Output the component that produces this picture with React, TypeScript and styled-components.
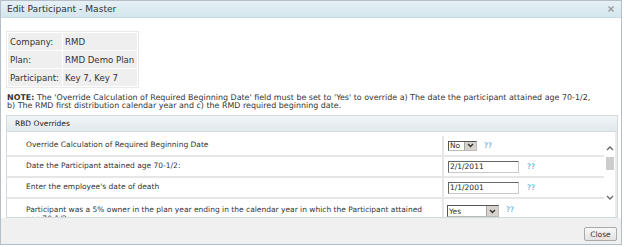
import React from "react";
import styled, { createGlobalStyle } from "styled-components";

const GlobalStyle = createGlobalStyle`
  html, body { margin: 0; padding: 0; background: #ffffff; }
  body { font-family: "DejaVu Sans", Verdana, sans-serif; font-size: 7.5px; color: #333; }
  * { box-sizing: border-box; }
`;

const Dialog = styled.div`
  width: 622px;
  height: 245px;
  border: 1px solid #b4bec4;
  display: flex;
  flex-direction: column;
  background: #fff;
`;

const TitleBar = styled.div`
  height: 17px;
  flex: none;
  display: flex;
  align-items: center;
  justify-content: space-between;
  padding: 0 7px 0 6px;
  background: linear-gradient(#e6f1f6, #d3e6ee);
  border-bottom: 1px solid #c9dbe3;
  font-size: 9.1px;
  color: #333;
`;

const CloseX = styled.svg`
  width: 6px;
  height: 6px;
  margin-top: -1px;
`;

const Body = styled.div`
  flex: 1;
  padding: 13px 4px 0 5px;
  display: flex;
  flex-direction: column;
  align-items: flex-start;
`;

const InfoTable = styled.div`
  display: grid;
  grid-template-columns: 54px 74px;
  grid-auto-rows: 17px;
  gap: 1px;
  padding: 1px;
  border: 1px solid #e9e9e9;
`;

const InfoCell = styled.div`
  background: #efefef;
  display: flex;
  align-items: center;
  padding-left: 2px;
  font-size: 8.6px;
  white-space: nowrap;
  overflow: hidden;
`;

const Note = styled.p`
  margin: 6px 0 0 1px;
  line-height: 8px;
  font-size: 7.95px;
`;

const Panel = styled.div`
  margin-top: 5px;
  width: 612px;
  border: 1px solid #d3dadd;
  display: flex;
  flex-direction: column;
`;

const PanelHeader = styled.div`
  height: 16px;
  display: flex;
  align-items: center;
  padding-left: 8px;
  background: linear-gradient(#f1f5f7, #e1e9ed);
  border-bottom: 1px solid #d3dadd;
  font-size: 7.5px;
  color: #222;
`;

const ScrollArea = styled.div`
  height: 85px;
  display: flex;
`;

const Rows = styled.div`
  flex: 1;
  overflow: hidden;
  padding-top: 4px;
`;

const Row = styled.div`
  display: grid;
  grid-template-columns: 437px 1fr;
  height: 21px;
  border-bottom: 2px solid #e6e6e6;
`;

const Label = styled.div<{ $multi?: boolean }>`
  padding: ${(p) => (p.$multi ? "7px 10px 0 19px" : "0 0 0 19px")};
  display: flex;
  align-items: ${(p) => (p.$multi ? "flex-start" : "center")};
  line-height: 8.5px;
  border-right: 2px solid #e6e6e6;
`;

const Control = styled.div<{ $top?: boolean }>`
  display: flex;
  align-items: ${(p) => (p.$top ? "flex-start" : "center")};
  padding: ${(p) => (p.$top ? "6px 0 0 3px" : "0 0 0 4px")};
`;

const FakeSelect = styled.div<{ $w: number }>`
  width: ${(p) => p.$w}px;
  height: ${(p) => (p.$w > 40 ? 12 : 10)}px;
  border: 1px solid;
  border-color: #555 #bbb #bbb #555;
  display: flex;
  align-items: stretch;
  background: #fff;
  font-size: 7.5px;
`;

const SelectValue = styled.span`
  flex: 1;
  padding-left: 1px;
  display: flex;
  align-items: center;
`;

const SelectArrow = styled.span`
  width: 12px;
  background: #d6d3ce;
  border-left: 1px solid #a9a6a0;
  display: flex;
  align-items: center;
  justify-content: center;
`;

const TextInput = styled.input`
  width: 71px;
  height: 12px;
  border: 1px solid;
  border-color: #666 #c8c8c8 #c8c8c8 #666;
  padding: 0 1px;
  font-family: "DejaVu Sans", Verdana, sans-serif;
  font-size: 7.5px;
  color: #222;
  outline: none;
`;

const Help = styled.a<{ $gap: number }>`
  margin-left: ${(p) => p.$gap}px;
  color: #3d9ad6;
  text-decoration: none;
  font-size: 7.5px;
`;

const ScrollBar = styled.div`
  width: 13px;
  display: flex;
  flex-direction: column;
  align-items: center;
  padding-top: 14px;
  border-right: 2px solid #ececec;
`;

const Thumb = styled.div`
  width: 8px;
  height: 13px;
  margin-top: 6px;
  background: #cdcdcd;
`;

const ScrollSpacer = styled.div`
  flex: 1;
  max-height: 25px;
`;

const Footer = styled.div`
  flex: 1;
  background: #f0f0f0;
  display: flex;
  justify-content: flex-end;
  align-items: flex-start;
  padding: 9px 4px 0 0;
`;

const Button = styled.button`
  width: 33px;
  height: 14px;
  padding: 0;
  border: 1px solid #aaa;
  border-radius: 2px;
  background: linear-gradient(#f7f7f7, #e2e2e2);
  font-family: "DejaVu Sans", Verdana, sans-serif;
  font-size: 7.5px;
  color: #333;
`;

const Chevron = ({ up }: { up?: boolean }) => (
  <svg width="8" height="5" viewBox="0 0 8 5">
    <path
      d={up ? "M1 4 L4 1 L7 4" : "M1 1 L4 4 L7 1"}
      fill="none"
      stroke="#666"
      strokeWidth="1.3"
    />
  </svg>
);

const SmallArrow = () => (
  <svg width="7" height="5" viewBox="0 0 7 5">
    <path d="M1 1 L3.5 3.5 L6 1" fill="none" stroke="#333" strokeWidth="1.4" />
  </svg>
);

export default function App() {
  return (
    <>
      <GlobalStyle />
      <Dialog>
        <TitleBar>
          <span>Edit Participant - Master</span>
          <CloseX viewBox="0 0 6 6">
            <path d="M0.5 0.5 L5.5 5.5 M5.5 0.5 L0.5 5.5" stroke="#9a9a9a" strokeWidth="1.4" />
          </CloseX>
        </TitleBar>
        <Body>
          <InfoTable>
            <InfoCell>Company:</InfoCell>
            <InfoCell>RMD</InfoCell>
            <InfoCell>Plan:</InfoCell>
            <InfoCell>RMD Demo Plan</InfoCell>
            <InfoCell>Participant:</InfoCell>
            <InfoCell>Key 7, Key 7</InfoCell>
          </InfoTable>
          <Note>
            <b>NOTE:</b> The 'Override Calculation of Required Beginning Date' field must be set to 'Yes' to override a) The date the participant attained age 70-1/2,
            <br />
            b) The RMD first distribution calendar year and c) the RMD required beginning date.
          </Note>
          <Panel>
            <PanelHeader>RBD Overrides</PanelHeader>
            <ScrollArea>
              <Rows>
                <Row>
                  <Label>Override Calculation of Required Beginning Date</Label>
                  <Control>
                    <FakeSelect $w={29}>
                      <SelectValue>No</SelectValue>
                      <SelectArrow>
                        <SmallArrow />
                      </SelectArrow>
                    </FakeSelect>
                    <Help $gap={7}>??</Help>
                  </Control>
                </Row>
                <Row>
                  <Label>Date the Participant attained age 70-1/2:</Label>
                  <Control>
                    <TextInput readOnly value="2/1/2011" />
                    <Help $gap={8}>??</Help>
                  </Control>
                </Row>
                <Row>
                  <Label>Enter the employee's date of death</Label>
                  <Control>
                    <TextInput readOnly value="1/1/2001" />
                    <Help $gap={8}>??</Help>
                  </Control>
                </Row>
                <Row>
                  <Label $multi>
                    Participant was a 5% owner in the plan year ending in the calendar year in which the Participant attained age 70-1/2:
                  </Label>
                  <Control $top>
                    <FakeSelect $w={52}>
                      <SelectValue>Yes</SelectValue>
                      <SelectArrow>
                        <SmallArrow />
                      </SelectArrow>
                    </FakeSelect>
                    <Help $gap={7}>??</Help>
                  </Control>
                </Row>
              </Rows>
              <ScrollBar>
                <Chevron up />
                <Thumb />
                <ScrollSpacer />
                <Chevron />
              </ScrollBar>
            </ScrollArea>
          </Panel>
        </Body>
        <Footer>
          <Button>Close</Button>
        </Footer>
      </Dialog>
    </>
  );
}
